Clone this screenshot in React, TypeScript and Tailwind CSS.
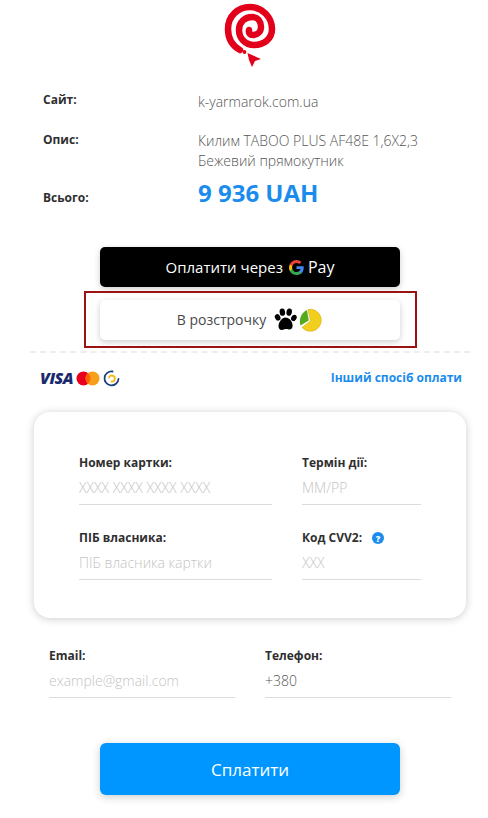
const Logo = () => (
  <svg width="60" height="70" viewBox="0 0 60 70" fill="none">
    <path
      d="M20 48C11 43 8 35 8 27C8 14 18 5 30 5C42 5 52 15 52 27C52 37 44 43 34 43C25 43 19 36 19 28C19 20 25 15 32 15C38 15 41 20 41 25C41 30 37 33 33 33C30 33 28.500 31 29 28"
      stroke="#e2001a"
      strokeWidth="6.500"
      strokeLinecap="round"
    />
    <circle cx="24.500" cy="50" r="1.900" fill="#e2001a" />
    <path d="M27.500 51L41 57L35 59L32 65L29 58Z" fill="#e2001a" />
  </svg>
);

const GoogleG = () => (
  <svg width="15" height="15" viewBox="0 0 24 24">
    <path fill="#4285F4" d="M23.500 12.300c0-.9-.1-1.600-.2-2.300H12v4.500h6.500c-.3 1.500-1.100 2.700-2.400 3.600v3h3.900c2.200-2.100 3.500-5.100 3.500-8.800z" />
    <path fill="#34A853" d="M12 24c3.200 0 6-1.100 8-2.900l-3.900-3c-1.100.7-2.400 1.200-4.100 1.200-3.100 0-5.800-2.100-6.700-5H1.300v3.100C3.300 21.300 7.300 24 12 24z" />
    <path fill="#FBBC05" d="M5.300 14.300c-.5-1.500-.5-3.100 0-4.600V6.600h-4c-1.700 3.300-1.700 7.500 0 10.800l4-3.100z" />
    <path fill="#EA4335" d="M12 4.700c1.800 0 3.400.6 4.600 1.800l3.400-3.400C18 1.200 15.200 0 12 0 7.300 0 3.300 2.700 1.300 6.600l4 3.100c.9-2.900 3.600-5 6.700-5z" />
  </svg>
);

const Paw = () => (
  <svg width="23" height="23" viewBox="0 0 22 22" fill="#000">
    <ellipse cx="3.500" cy="9" rx="2.500" ry="3.200" transform="rotate(-30 3.500 9)" />
    <ellipse cx="8" cy="4" rx="2.600" ry="3.500" transform="rotate(-10 8 4)" />
    <ellipse cx="14.500" cy="4" rx="2.600" ry="3.500" transform="rotate(12 14.500 4)" />
    <ellipse cx="19" cy="9.500" rx="2.500" ry="3.200" transform="rotate(30 19 9.500)" />
    <path d="M11 9C14.500 9 18 13 17.800 17C17.700 20 15.500 21 14 20.500C12.500 20 10 20 8.500 20.800C6.500 21.800 4.300 20 4.300 17.500C4.300 13.500 7.500 9 11 9Z" />
  </svg>
);

const PieLogo = () => (
  <svg width="24" height="24" viewBox="0 0 24 24">
    <path d="M9 1.500A11 11 0 1 1 3 19.500L11.500 13Z" fill="#f2cf1d" stroke="#d9a90f" strokeWidth="0.600" />
    <path d="M8 2L9.800 12.500L1.500 17.500C-0.500 11 2.500 4.500 8 2Z" fill="#55ab1c" />
  </svg>
);

const Field = ({ label, placeholder, dark, help, className }: { label: string; placeholder: string; dark?: boolean; help?: boolean; className: string }) => (
  <div className={className}>
    <div className="flex items-center h-[18px] text-[12px] font-bold text-[#2f2f2f]">
      {label}
      {help && (
        <span className="ml-[10px] flex h-[12px] w-[12px] items-center justify-center rounded-full bg-[#1a8cee] text-[9px] font-extrabold leading-none text-white">
          ?
        </span>
      )}
    </div>
    <div className={`mt-[4px] h-[29px] border-b border-[#dcdcdc] pt-[2px] text-[14px] font-light leading-[20px] ${dark ? 'text-[#555555]' : 'text-[#c4c4c4]'}`}>
      {placeholder}
    </div>
  </div>
);

export default function App() {
  return (
    <div className="h-[818px] w-[488px] overflow-hidden bg-white font-['Open_Sans',sans-serif]">
      <div className="w-[500px]">
        <div className="flex justify-center pt-[2px]">
          <Logo />
        </div>

        <div className="pl-[43px] pt-[18px]">
          <div className="flex h-[40px]">
            <div className="w-[155px] pt-[1px] text-[12px] font-bold leading-[18px] text-[#2f2f2f]">Сайт:</div>
            <div className="pt-[2px] text-[14px] font-light leading-[20px] text-[#555555]">k-yarmarok.com.ua</div>
          </div>
          <div className="flex h-[46px]">
            <div className="w-[155px] pt-[1px] text-[12px] font-bold leading-[18px] text-[#2f2f2f]">Опис:</div>
            <div className="pt-[1px] text-[14px] font-light leading-[20px] text-[#555555]">
              Килим TABOO PLUS AF48E 1,6X2,3
              <br />
              Бежевий прямокутник
            </div>
          </div>
          <div className="flex h-[34px] items-end">
            <div className="w-[155px] pb-[3px] text-[12px] font-bold leading-[18px] text-[#2f2f2f]">Всього:</div>
            <div className="text-[24px] font-bold leading-[34px] text-[#1a8cee]">9 936 UAH</div>
          </div>
        </div>

        <div className="mt-[37px] flex flex-col items-center">
          <div className="flex h-[40px] w-[300px] items-center justify-center rounded-[5px] bg-black text-[15px] text-white shadow-[0_2px_6px_rgba(0,0,0,0.2)]">
            <span>Оплатити через</span>
            <span className="ml-[6px]"><GoogleG /></span>
            <span className="ml-[4px] text-[16px]">Pay</span>
          </div>
          <div className="ml-[1px] mt-[4px] flex h-[57px] w-[333px] items-center justify-center border-2 border-[#9b1414]">
            <div className="mr-[1px] flex h-[40px] w-[300px] items-center justify-center rounded-[5px] bg-white text-[14px] text-[#4a4a4a] shadow-[0_2px_6px_rgba(0,0,0,0.2)]">
              <span>В розстрочку</span>
              <span className="ml-[8px]"><Paw /></span>
              <span className="ml-[2px]"><PieLogo /></span>
            </div>
          </div>
        </div>

        <div className="mx-[30px] mt-[3px] border-t-2 border-dashed border-[#eeeeee]" />

        <div className="flex h-[46px] items-center justify-between pl-[40px] pr-[38px] pt-[4px]">
          <div className="flex items-center">
            <span className="text-[16px] font-extrabold italic leading-none tracking-[-0.5px] text-[#1a2a6c]">VISA</span>
            <svg className="ml-[3px]" width="24" height="15" viewBox="0 0 24 15">
              <circle cx="7.500" cy="7.500" r="7" fill="#e8001c" />
              <circle cx="16.500" cy="7.500" r="7" fill="#f79e1b" />
              <path d="M12 2.200a7 7 0 0 1 0 10.600a7 7 0 0 1 0-10.600z" fill="#ff5f00" />
            </svg>
            <svg className="ml-[3px]" width="17" height="17" viewBox="0 0 17 17" fill="none">
              <path d="M9.500 1.500A7 7 0 1 0 15.500 9" stroke="#1f3f7a" strokeWidth="1.800" strokeLinecap="round" />
              <path d="M6 7.500A3 3 0 1 1 8.500 11.500" stroke="#f2b90f" strokeWidth="1.800" strokeLinecap="round" />
            </svg>
          </div>
          <span className="text-[12px] font-bold text-[#1a8cee]">Інший спосіб оплати</span>
        </div>

        <div className="mx-[34px] mt-[13px] h-[206px] rounded-[16px] bg-white pl-[45px] pt-[42px] shadow-[0_1px_9px_rgba(0,0,0,0.2)]">
          <div className="flex">
            <Field className="w-[193px]" label="Номер картки:" placeholder="XXXX XXXX XXXX XXXX" />
            <Field className="ml-[30px] w-[119px]" label="Термін дії:" placeholder="MM/PP" />
          </div>
          <div className="mt-[24px] flex">
            <Field className="w-[193px]" label="ПІБ власника:" placeholder="ПІБ власника картки" />
            <Field className="ml-[30px] w-[119px]" label="Код CVV2:" placeholder="XXX" help />
          </div>
        </div>

        <div className="mt-[29px] flex pl-[49px]">
          <Field className="w-[186px]" label="Email:" placeholder="example@gmail.com" />
          <Field className="ml-[30px] w-[186px]" label="Телефон:" placeholder="+380" dark />
        </div>

        <div className="mt-[45px] flex justify-center">
          <div className="flex h-[52px] w-[300px] items-center justify-center rounded-[6px] bg-[#0096ff] pt-[1px] text-[17px] font-medium text-white shadow-[0_2px_8px_rgba(0,0,0,0.2)]">
            Сплатити
          </div>
        </div>
      </div>
    </div>
  );
}
